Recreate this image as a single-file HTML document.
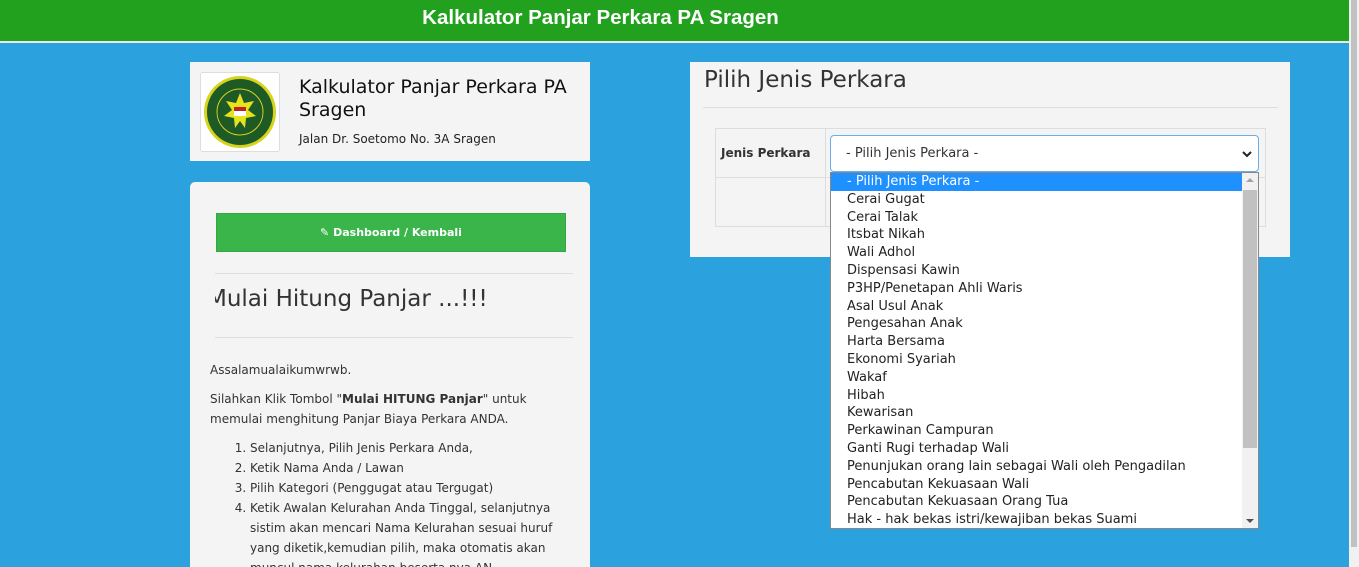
<!DOCTYPE html>
<html style="overflow:hidden;height:567px"><head><meta charset="utf-8"><style>
*{box-sizing:border-box;margin:0;padding:0}
body{width:1359px;height:567px;overflow:hidden;background:#2ba1de;font-family:"DejaVu Sans","Liberation Sans",sans-serif;color:#333;position:relative}
.top{position:absolute;left:0;top:0;width:1349px;height:43px;background:#21a11e;color:#fff;font:bold 20.5px "Liberation Sans",sans-serif;text-align:center;line-height:36px;border-bottom:2px solid #eaeaea}
.top span{position:relative;left:-74px}
.sb{position:absolute;right:0;top:0;width:10px;height:567px;background:#f1f1f1}
.sb div{position:absolute;left:2px;top:0;width:6px;height:547px;background:#c1c1c1}
.p{position:absolute;background:#f4f4f4}
.f{font-size:13px}
</style></head><body>
<div class="top"><span>Kalkulator Panjar Perkara PA Sragen</span></div>
<div class="sb"><div></div></div>

<div class="p" style="left:190px;top:62px;width:400px;height:99px">
 <div style="position:absolute;left:10px;top:10px;width:80px;height:80px;background:#fff;border:1px solid #ddd;border-radius:3px">
  <svg width="78" height="78" viewBox="0 0 78 78"><circle cx="39" cy="39" r="36" fill="#d7d21a"/><circle cx="39" cy="39" r="33" fill="#1e5a26"/><circle cx="39" cy="39" r="23" fill="none" stroke="#d7d21a" stroke-width="1"/><polygon points="39,20 43,30 53,28 47,37 55,43 45,45 44,55 39,48 34,55 33,45 23,43 31,37 25,28 35,30" fill="#e8e21e"/><rect x="33" y="34" width="12" height="9" fill="#b22"/><rect x="33" y="38" width="12" height="5" fill="#fff"/></svg>
 </div>
 <div style="position:absolute;left:109px;top:14px;font-size:19px;line-height:23px;color:#111;width:290px">Kalkulator Panjar Perkara PA Sragen</div>
 <div class="f" style="position:absolute;left:109px;top:70px;font-size:12px;color:#222">Jalan Dr. Soetomo No. 3A Sragen</div>
</div>

<div class="p" style="left:190px;top:182px;width:400px;height:400px;border-radius:5px;overflow:hidden">
 <div style="position:absolute;left:26px;top:31px;width:350px;height:39px;background:#39b54a;border:1px solid #35a644;color:#fff;font-size:11px;font-weight:bold;text-align:center;line-height:38px">&#9998; Dashboard / Kembali</div>
 <div style="position:absolute;left:25px;top:91px;width:358px;border-top:1px solid #ddd"></div>
 <div style="position:absolute;left:25px;top:104px;width:350px;overflow:hidden;font-size:23px;color:#333;white-space:nowrap"><span style="margin-left:-8px">Mulai Hitung Panjar ...!!!</span></div>
 <div style="position:absolute;left:25px;top:155px;width:358px;border-top:1px solid #ddd"></div>
 <div style="position:absolute;left:20px;top:178px;width:350px;line-height:20px;font-size:12px">
  <p style="margin-bottom:9px">Assalamualaikumwrwb.</p>
  <p style="margin-bottom:9px">Silahkan Klik Tombol "<b>Mulai HITUNG Panjar</b>" untuk memulai menghitung Panjar Biaya Perkara ANDA.</p>
  <ol style="padding-left:40px"><li>Selanjutnya, Pilih Jenis Perkara Anda,</li><li>Ketik Nama Anda / Lawan</li><li>Pilih Kategori (Penggugat atau Tergugat)</li><li>Ketik Awalan Kelurahan Anda Tinggal, selanjutnya sistim akan mencari Nama Kelurahan sesuai huruf yang diketik,kemudian pilih, maka otomatis akan muncul nama kelurahan beserta nya AN</li></ol>
 </div>
</div>

<div class="p" style="left:690px;top:62px;width:600px;height:195px">
 <div style="position:absolute;left:14px;top:5px;font-size:23px;color:#333">Pilih Jenis Perkara</div>
 <div style="position:absolute;left:13px;top:45px;width:575px;border-top:1px solid #ddd"></div>
 <div style="position:absolute;left:25px;top:66px;width:551px;height:99px;border:1px solid #ddd">
  <div style="position:absolute;left:109px;top:0;height:97px;border-left:1px solid #ddd"></div>
  <div style="position:absolute;left:0;top:48px;width:549px;border-top:1px solid #ddd"></div>
  <div class="f" style="position:absolute;left:5px;top:17px;font-weight:bold;font-size:12px">Jenis Perkara</div>
 </div>
 <div style="position:absolute;left:140px;top:73px;width:429px;height:37px;background:#fff;border:1px solid #66afe9;border-radius:4px;font-size:13px;line-height:35px;padding-left:15px">- Pilih Jenis Perkara -<svg style="position:absolute;right:6px;top:14px" width="10" height="8" viewBox="0 0 10 8"><path d="M1 2 L5 6 L9 2" fill="none" stroke="#222" stroke-width="2"/></svg></div>
</div>

<div style="position:absolute;left:830px;top:172px;width:429px;height:357px;background:#fff;border:1px solid #888;font-size:13px;line-height:17.8px">
 <div style="position:absolute;right:0;top:0;width:16px;height:355px;background:#f1f1f1"><div style="position:absolute;left:1px;top:17px;width:14px;height:258px;background:#c1c1c1"></div><div style="position:absolute;left:4px;top:5px;border:4px solid transparent;border-bottom-color:#a3a3a3;border-top:0"></div><div style="position:absolute;left:4px;bottom:5px;border:4px solid transparent;border-top-color:#505050;border-bottom:0"></div></div>
 <div style="width:411px;padding-top:0">
 <div style="background:#1e90ff;color:#fff;padding-left:16px">- Pilih Jenis Perkara -</div>
 <div style="padding-left:16px;color:#222">Cerai Gugat<br>Cerai Talak<br>Itsbat Nikah<br>Wali Adhol<br>Dispensasi Kawin<br>P3HP/Penetapan Ahli Waris<br>Asal Usul Anak<br>Pengesahan Anak<br>Harta Bersama<br>Ekonomi Syariah<br>Wakaf<br>Hibah<br>Kewarisan<br>Perkawinan Campuran<br>Ganti Rugi terhadap Wali<br>Penunjukan orang lain sebagai Wali oleh Pengadilan<br>Pencabutan Kekuasaan Wali<br>Pencabutan Kekuasaan Orang Tua<br>Hak - hak bekas istri/kewajiban bekas Suami</div>
 </div>
</div>
</body></html>
